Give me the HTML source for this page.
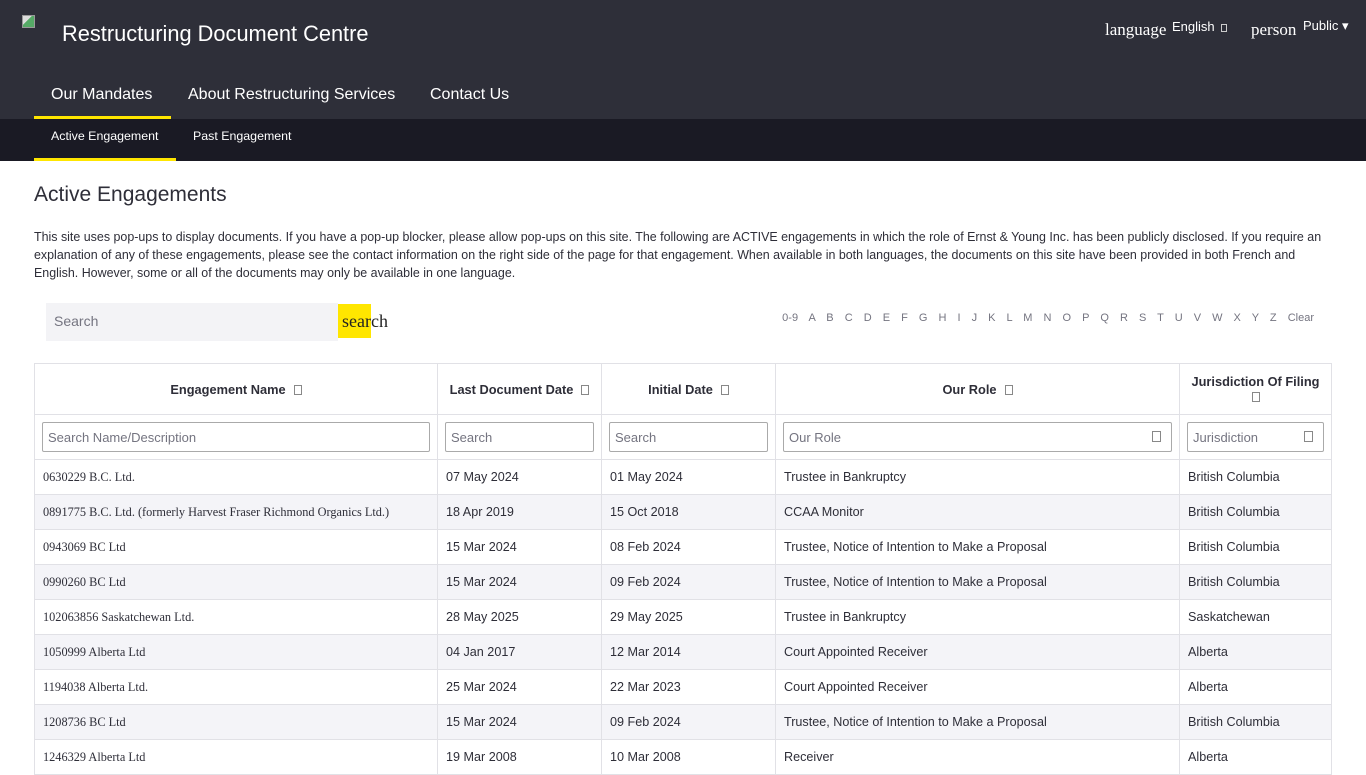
<!DOCTYPE html>
<html><head><meta charset="utf-8"><style>
*{box-sizing:border-box;margin:0;padding:0}
body{width:1366px;height:768px;overflow:hidden;background:#fff;font-family:"Liberation Sans",sans-serif;color:#2e2e38}
.top{position:absolute;left:0;top:0;width:1366px;height:119px;background:#2e2f39}
.title{position:absolute;left:62px;top:21px;color:#fff;font-size:21.8px}
.img{position:absolute;left:22px;top:15px;width:13px;height:13px;border:1px solid #999;background:linear-gradient(135deg,#ddd 40%,#5a6 41%)}
.nav{position:absolute;top:86px;color:#fff;font-size:16px}
.ul{position:absolute;height:3px;background:#ffe600}
.sub{position:absolute;left:0;top:119px;width:1366px;height:42px;background:#1a1a24}
.sn{position:absolute;top:129px;color:#fff;font-size:12.4px}
h1{position:absolute;left:34px;top:183px;font-size:21px;font-weight:normal;color:#2e2e38}
.p{position:absolute;left:34px;top:228px;white-space:nowrap;font-size:12.45px;line-height:18px;color:#2e2e38}
.srch{position:absolute;left:46px;top:303px;width:292px;height:38px;background:#f3f3f6;color:#747480;font-size:14px;padding:10px 8px}
.sbtn{position:absolute;left:338px;top:304px;width:33px;height:34px;background:#ffe600}
.stx{position:absolute;left:342px;top:311px;font-family:"Liberation Serif",serif;font-size:18px;color:#222}
.az{position:absolute;top:312px;right:52px;font-size:11px;color:#747480;word-spacing:8px}
table{position:absolute;left:34px;top:363px;width:1298px;border-collapse:collapse;font-size:12.6px}
td,th{border:1px solid #e1e1e6;padding:0 8px;height:35px;text-align:left;font-weight:normal}
th{height:51px;text-align:center;font-weight:bold;font-size:12.8px}
tr.f td{height:45px;padding:0 7px}
.in{border:1px solid #aaa;border-radius:2px;height:30px;font-size:13px;color:#747480;padding:7px 5px;position:relative}
.in i{position:absolute;right:10px;top:8px;width:9px;height:11px;border:1px solid #888}
.sq{display:inline-block;width:8px;height:10px;border:1px solid #888;margin-left:8px;vertical-align:-1px}
td.n{font-family:"Liberation Serif",serif;font-size:12.3px}
tr.a td{background:#f4f4f8}
</style></head><body>
<div class="top"></div>
<div class="img"></div>
<div class="title">Restructuring Document Centre</div>
<div style="position:absolute;left:1105px;top:20px;color:#fff;font-family:'Liberation Serif',serif;font-size:17px">language</div>
<div style="position:absolute;left:1172px;top:19px;color:#fff;font-size:13px">English</div>
<div style="position:absolute;left:1221px;top:24px;width:6px;height:8px;border:1px solid #ccc"></div>
<div style="position:absolute;left:1251px;top:20px;color:#fff;font-family:'Liberation Serif',serif;font-size:17px">person</div>
<div style="position:absolute;left:1303px;top:18px;color:#fff;font-size:13px">Public ▾</div>
<div class="nav" style="left:51px">Our Mandates</div>
<div class="nav" style="left:188px">About Restructuring Services</div>
<div class="nav" style="left:430px">Contact Us</div>
<div class="ul" style="left:34px;top:116px;width:137px"></div>
<div class="sub"></div>
<div class="sn" style="left:51px">Active Engagement</div>
<div class="sn" style="left:193px">Past Engagement</div>
<div class="ul" style="left:34px;top:158px;width:142px"></div>
<h1>Active Engagements</h1>
<div class="p">This site uses pop-ups to display documents. If you have a pop-up blocker, please allow pop-ups on this site. The following are ACTIVE engagements in which the role of Ernst &amp; Young Inc. has been publicly disclosed. If you require an<br>explanation of any of these engagements, please see the contact information on the right side of the page for that engagement. When available in both languages, the documents on this site have been provided in both French and<br>English. However, some or all of the documents may only be available in one language.</div>
<div class="srch">Search</div><div class="sbtn"></div><div class="stx">search</div>
<div class="az">0-9 A B C D E F G H I J K L M N O P Q R S T U V W X Y Z Clear</div>
<table>
<tr><th style="width:403px">Engagement Name<span class="sq"></span></th><th style="width:164px">Last Document Date<span class="sq"></span></th><th style="width:174px">Initial Date<span class="sq"></span></th><th style="width:404px">Our Role<span class="sq"></span></th><th>Jurisdiction Of Filing<br><span class="sq" style="margin:0"></span></th></tr>
<tr class="f"><td><div class="in">Search Name/Description</div></td><td><div class="in">Search</div></td><td><div class="in">Search</div></td><td><div class="in">Our Role<i></i></div></td><td><div class="in">Jurisdiction<i></i></div></td></tr>
<tr><td class="n">0630229 B.C. Ltd.</td><td>07 May 2024</td><td>01 May 2024</td><td>Trustee in Bankruptcy</td><td>British Columbia</td></tr>
<tr class="a"><td class="n">0891775 B.C. Ltd. (formerly Harvest Fraser Richmond Organics Ltd.)</td><td>18 Apr 2019</td><td>15 Oct 2018</td><td>CCAA Monitor</td><td>British Columbia</td></tr>
<tr><td class="n">0943069 BC Ltd</td><td>15 Mar 2024</td><td>08 Feb 2024</td><td>Trustee, Notice of Intention to Make a Proposal</td><td>British Columbia</td></tr>
<tr class="a"><td class="n">0990260 BC Ltd</td><td>15 Mar 2024</td><td>09 Feb 2024</td><td>Trustee, Notice of Intention to Make a Proposal</td><td>British Columbia</td></tr>
<tr><td class="n">102063856 Saskatchewan Ltd.</td><td>28 May 2025</td><td>29 May 2025</td><td>Trustee in Bankruptcy</td><td>Saskatchewan</td></tr>
<tr class="a"><td class="n">1050999 Alberta Ltd</td><td>04 Jan 2017</td><td>12 Mar 2014</td><td>Court Appointed Receiver</td><td>Alberta</td></tr>
<tr><td class="n">1194038 Alberta Ltd.</td><td>25 Mar 2024</td><td>22 Mar 2023</td><td>Court Appointed Receiver</td><td>Alberta</td></tr>
<tr class="a"><td class="n">1208736 BC Ltd</td><td>15 Mar 2024</td><td>09 Feb 2024</td><td>Trustee, Notice of Intention to Make a Proposal</td><td>British Columbia</td></tr>
<tr><td class="n">1246329 Alberta Ltd</td><td>19 Mar 2008</td><td>10 Mar 2008</td><td>Receiver</td><td>Alberta</td></tr>
</table>
</body></html>
